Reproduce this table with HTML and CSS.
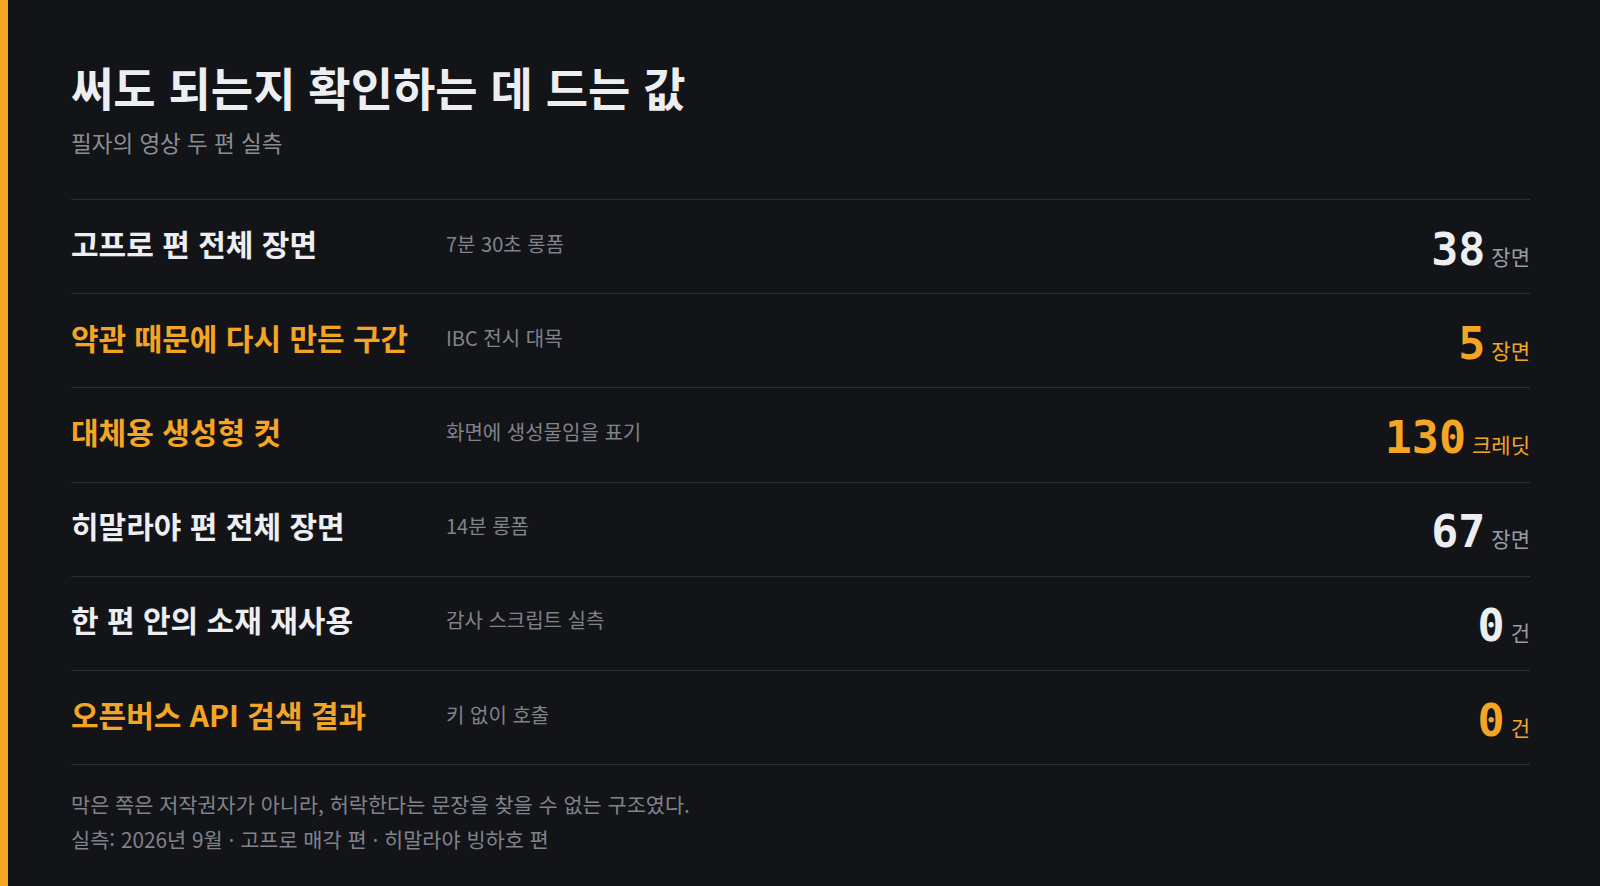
FILE: index.html
```html
<!DOCTYPE html>
<html lang="ko">
<head>
    <meta charset="UTF-8">
    <meta name="viewport" content="width=device-width, initial-scale=1.0">
    <title>써도 되는지 확인하는 데 드는 값</title>
    <link rel="stylesheet" href="styles.css">
</head>
<body>
    <div class="panel">
        <h1 class="title">써도 되는지 확인하는 데 드는 값</h1>
        <p class="subtitle">필자의 영상 두 편 실측</p>

        <div class="cost-table">
            <div class="cost-row">
                <div class="label">고프로 편 전체 장면</div>
                <div class="desc">7분 30초 롱폼</div>
                <div class="value"><span class="num">38</span><span class="unit">장면</span></div>
            </div>
            <div class="cost-row accent">
                <div class="label">약관 때문에 다시 만든 구간</div>
                <div class="desc">IBC 전시 대목</div>
                <div class="value"><span class="num">5</span><span class="unit">장면</span></div>
            </div>
            <div class="cost-row accent">
                <div class="label">대체용 생성형 컷</div>
                <div class="desc">화면에 생성물임을 표기</div>
                <div class="value"><span class="num">130</span><span class="unit">크레딧</span></div>
            </div>
            <div class="cost-row">
                <div class="label">히말라야 편 전체 장면</div>
                <div class="desc">14분 롱폼</div>
                <div class="value"><span class="num">67</span><span class="unit">장면</span></div>
            </div>
            <div class="cost-row">
                <div class="label">한 편 안의 소재 재사용</div>
                <div class="desc">감사 스크립트 실측</div>
                <div class="value"><span class="num">0</span><span class="unit">건</span></div>
            </div>
            <div class="cost-row accent">
                <div class="label">오픈버스 API 검색 결과</div>
                <div class="desc">키 없이 호출</div>
                <div class="value"><span class="num">0</span><span class="unit">건</span></div>
            </div>
        </div>

        <div class="footnote">
            <p>막은 쪽은 저작권자가 아니라, 허락한다는 문장을 찾을 수 없는 구조였다.</p>
            <p>실측: 2026년 9월 · 고프로 매각 편 · 히말라야 빙하호 편</p>
        </div>
    </div>
</body>
</html>
```

FILE: styles.css
```css
html, body {
    height: 100%;
    margin: 0;
    padding: 0;
    background-color: #131418;
    font-family: "Noto Sans CJK KR", "Noto Sans", sans-serif;
}

.panel {
    box-sizing: border-box;
    min-height: 100%;
    border-left: 8px solid #f5a524;
    padding: 63px 70px 0 63px;
}

.title {
    margin: 0;
    font-size: 46px;
    line-height: 46px;
    font-weight: 700;
    color: #eceef2;
}

.subtitle {
    margin: 19px 0 0 0;
    font-size: 22.5px;
    line-height: 28px;
    color: #8b8e96;
}

.cost-table {
    margin-top: 43px;
    border-bottom: 1px solid #2b2d33;
}

.cost-row {
    display: flex;
    align-items: center;
    height: 93.2px;
    border-top: 1px solid #2b2d33;
    color: #eceef2;
}

.cost-row .label {
    width: 375px;
    margin-bottom: 8px;
    font-size: 30px;
    font-weight: 700;
}

.cost-row .desc {
    flex: 1;
    margin-bottom: 7px;
    font-size: 20px;
    color: #80838b;
}

.cost-row .value {
    display: flex;
    align-items: baseline;
    gap: 6px;
    padding-top: 5px;
}

.cost-row .num {
    font-family: "DejaVu Sans Mono", monospace;
    font-weight: 700;
    font-size: 45px;
    line-height: 1;
}

.cost-row .unit {
    font-size: 21px;
    color: #9a9da5;
}

/* orange rows */
.cost-row.accent .label,
.cost-row.accent .num,
.cost-row.accent .unit {
    color: #f5a524;
}

.footnote {
    margin-top: 22px;
}

.footnote p {
    margin: 0;
    font-size: 20.8px;
    line-height: 35px;
    color: #80838b;
}
```
